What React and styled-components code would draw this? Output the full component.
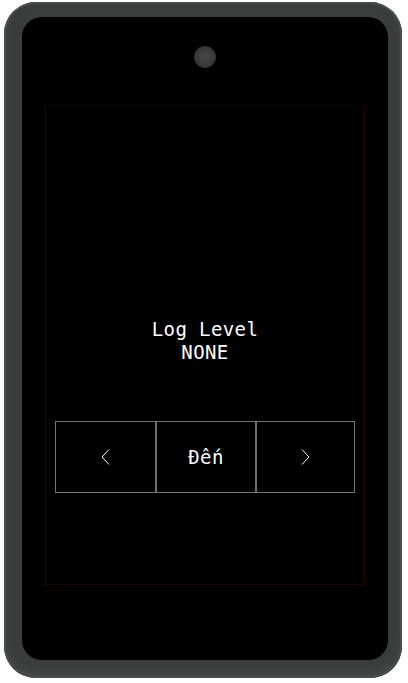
import styled, { createGlobalStyle } from 'styled-components';

const GlobalStyle = createGlobalStyle`
  html, body {
    margin: 0;
    padding: 0;
    background: #ffffff;
  }
`;

export const Phone = styled.div`
  box-sizing: border-box;
  margin: 2px 0 0 4px;
  width: 398px;
  height: 676px;
  border-radius: 32px;
  background: #3b3d3d;
  box-shadow: inset 0 0 0 2px #4a4c4c, inset 0 -6px 10px #474949;
  padding: 15px 14px 18px 18px;
`;

export const Screen = styled.div`
  height: 100%;
  border-radius: 20px;
  background: #000;
  display: flex;
  flex-direction: column;
  align-items: center;
`;

export const Camera = styled.div`
  margin-top: 29px;
  width: 22px;
  height: 22px;
  border-radius: 50%;
  background: radial-gradient(circle at 50% 50%, #484848 0%, #383838 60%, #1e1e1e 100%);
`;

export const Panel = styled.div`
  box-sizing: border-box;
  margin-top: 37px;
  width: 320px;
  height: 480px;
  border: 1px solid #230404;
  border-top-color: #100202;
  display: flex;
  flex-direction: column;
  align-items: center;
  padding-top: 212px;
`;

export const Label = styled.div`
  color: #fff;
  font-family: 'DejaVu Sans Mono', 'Liberation Mono', monospace;
  font-size: 19px;
  letter-spacing: 0.4px;
  line-height: 23px;
  text-align: center;
`;

export const Buttons = styled.div`
  margin-top: 57px;
  display: grid;
  grid-template-columns: repeat(3, 1fr);
  width: 300px;
  height: 72px;
  box-sizing: border-box;
  border: 1px solid #767676;
`;

export const Cell = styled.div`
  display: flex;
  align-items: center;
  justify-content: center;
  color: #fff;
  font-family: 'DejaVu Sans Mono', 'Liberation Mono', monospace;
  font-size: 19px;
  letter-spacing: 0.4px;
  border-left: ${p => (p.$first ? 'none' : '2px solid #6e6e6e')};
`;

const Chevron = ({ dir }) => (
  <svg width="9" height="16" viewBox="0 0 9 16">
    <polyline
      points={dir === 'left' ? '8,0.5 1,8 8,15.5' : '1,0.5 8,8 1,15.5'}
      fill="none"
      stroke="#fff"
      strokeWidth="1"
    />
  </svg>
);

export default function App() {
  return (
    <>
      <GlobalStyle />
      <Phone>
        <Screen>
          <Camera />
          <Panel>
            <Label>Log Level</Label>
            <Label>NONE</Label>
            <Buttons>
              <Cell $first>
                <Chevron dir="left" />
              </Cell>
              <Cell>Đến</Cell>
              <Cell>
                <Chevron dir="right" />
              </Cell>
            </Buttons>
          </Panel>
        </Screen>
      </Phone>
    </>
  );
}
